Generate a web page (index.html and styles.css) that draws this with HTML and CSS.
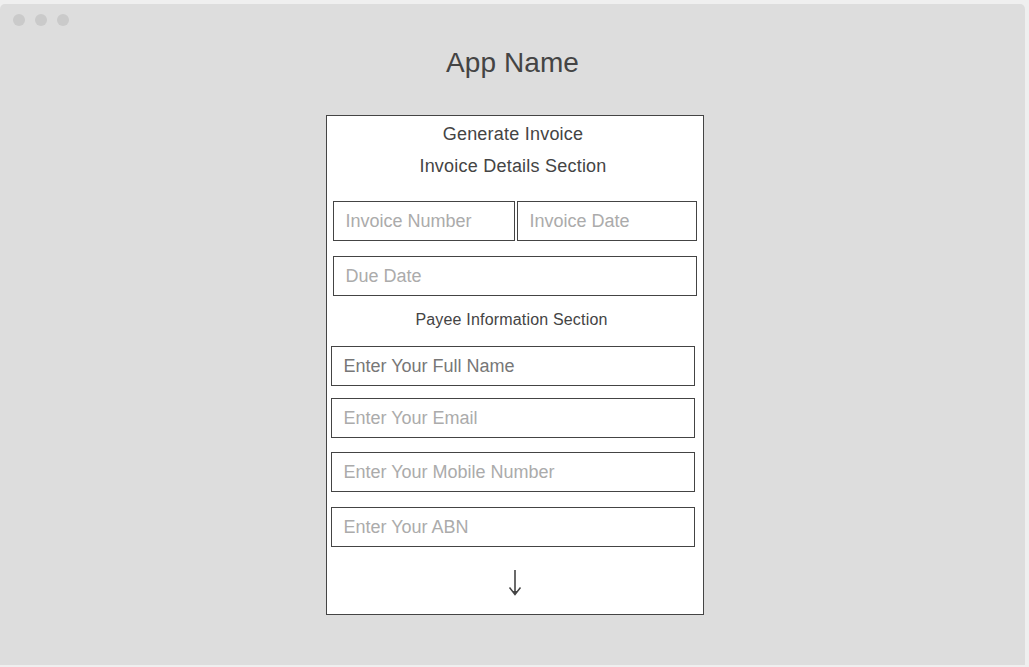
FILE: index.html
```html
<!DOCTYPE html>
<html>
<head>
<meta charset="utf-8">
<link rel="stylesheet" href="styles.css">
</head>
<body>
<div class="window">
  <div class="dots"><span class="dot"></span><span class="dot"></span><span class="dot"></span></div>
  <h1 class="app-title">App Name</h1>
  <div class="panel">
    <div class="panel-title">Generate Invoice</div>
    <div class="panel-title">Invoice Details Section</div>
    <div class="details">
      <div class="row">
        <input class="field" placeholder="Invoice Number">
        <input class="field" placeholder="Invoice Date">
      </div>
      <input class="field due" placeholder="Due Date">
    </div>
    <div class="sub-title">Payee Information Section</div>
    <div class="payee">
      <input class="field filled" value="Enter Your Full Name">
      <input class="field f-email" placeholder="Enter Your Email">
      <input class="field f-mobile" placeholder="Enter Your Mobile Number">
      <input class="field f-abn" placeholder="Enter Your ABN">
    </div>
    <div class="arrow">
      <svg width="14" height="26" viewBox="0 0 14 26">
        <line x1="7" y1="0" x2="7" y2="23" stroke="#444" stroke-width="1.6"/>
        <path d="M1.5 17.5 L7 24.5 L12.5 17.5" fill="none" stroke="#444" stroke-width="1.5"/>
        <path d="M4.5 21 L7 24.5 L9.5 21 Z" fill="#444"/>
      </svg>
    </div>
  </div>
</div>
</body>
</html>
```

FILE: styles.css
```css
* { box-sizing: border-box; }
html, body { margin: 0; padding: 0; }
body {
  background: #efefef;
  font-family: "Liberation Sans", Arial, sans-serif;
  width: 1029px;
  height: 667px;
  overflow: hidden;
}
.window {
  margin-top: 4px;
  width: 1025px;
  height: 661px;
  background: #dddddd;
  border-radius: 5px 5px 0 0;
  display: flex;
  flex-direction: column;
  align-items: center;
  position: relative;
}
.dots {
  position: absolute;
  left: 13px;
  top: 10px;
  display: flex;
  gap: 10px;
}
.dot {
  width: 12px;
  height: 12px;
  border-radius: 50%;
  background: #cacaca;
}
.app-title {
  margin: 41px 0 0 0;
  font-size: 28px;
  font-weight: normal;
  color: #444;
  line-height: 36px;
  letter-spacing: 0.1px;
}
.panel {
  margin-top: 34px;
  margin-left: 4px;
  width: 378px;
  height: 500px;
  background: #fff;
  border: 1px solid #444;
  display: flex;
  flex-direction: column;
  padding-top: 2px;
}
.panel-title {
  text-align: center;
  font-size: 18px;
  line-height: 32px;
  color: #444;
  letter-spacing: 0.22px;
  padding-right: 3px;
}
.details {
  margin-top: 19px;
  padding: 0 6px 0 6px;
  display: flex;
  flex-direction: column;
  gap: 15px;
}
.row {
  display: flex;
  gap: 2px;
}
.row .field:first-child { width: 182px; flex: none; }
.row .field:last-child { flex: 1; }
.field {
  display: block;
  height: 40px;
  border: 1px solid #444;
  background: #fff;
  font-family: "Liberation Sans", Arial, sans-serif;
  font-size: 18px;
  padding: 0 12px;
  color: #777;
  outline: none;
  margin: 0;
  width: 100%;
}
.field::placeholder { color: #ababab; }
.sub-title {
  margin-top: 12px;
  text-align: center;
  font-size: 16px;
  line-height: 24px;
  color: #444;
  letter-spacing: 0.18px;
  padding-right: 6px;
}
.payee {
  margin-top: 14px;
  padding: 0 8px 0 4px;
  display: flex;
  flex-direction: column;
}
.f-email { margin-top: 12px; }
.f-mobile { margin-top: 14px; }
.f-abn { margin-top: 15px; }
.arrow {
  margin-top: 23px;
  display: flex;
  justify-content: center;
  padding-left: 1px;
}
```
